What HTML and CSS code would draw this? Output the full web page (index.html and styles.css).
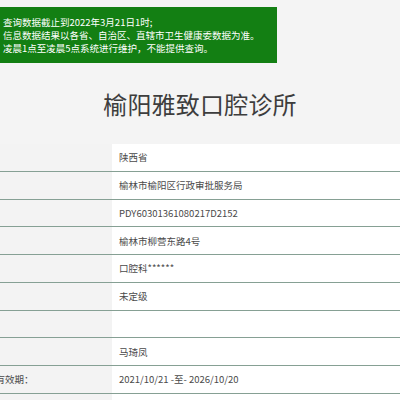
FILE: index.html
```html
<!DOCTYPE html>
<html lang="zh-CN">
<head>
<meta charset="utf-8">
<title>榆阳雅致口腔诊所</title>
<link rel="stylesheet" href="styles.css">
</head>
<body>
<div class="page">
  <div class="notice">
    <p>查询数据截止到2022年3月21日1时;</p>
    <p>信息数据结果以各省、自治区、直辖市卫生健康委数据为准。</p>
    <p>凌晨1点至凌晨5点系统进行维护，不能提供查询。</p>
  </div>
  <h1 class="title">榆阳雅致口腔诊所</h1>
  <div class="info">
    <div class="row"><div class="label">省份：</div><div class="value">陕西省</div></div>
    <div class="row"><div class="label">登记机关：</div><div class="value">榆林市榆阳区行政审批服务局</div></div>
    <div class="row"><div class="label">登记号：</div><div class="value">PDY60301361080217D2152</div></div>
    <div class="row"><div class="label">地址：</div><div class="value">榆林市柳营东路4号</div></div>
    <div class="row"><div class="label">诊疗科目：</div><div class="value">口腔科******</div></div>
    <div class="row"><div class="label">医院等级：</div><div class="value">未定级</div></div>
    <div class="row"><div class="label">法人：</div><div class="value"></div></div>
    <div class="row"><div class="label">负责人：</div><div class="value">马琦凤</div></div>
    <div class="row"><div class="label">执业许可证有效期：</div><div class="value">2021/10/21 -至- 2026/10/20</div></div>
    <div class="row"><div class="label">备注：</div><div class="value"></div></div>
  </div>
</div>
</body>
</html>
```
FILE: styles.css
```css
html, body {
  margin: 0;
  padding: 0;
}
body {
  background: #f4f4f4;
  font-family: "Microsoft YaHei", "Noto Sans CJK SC", "Noto Sans", sans-serif;
  overflow: hidden;
  height: 400px;
}
.page {
  padding-top: 7px;
}
.notice {
  width: 274px;
  background: #137f13;
  color: #ffffff;
  padding: 8.5px 0 8.5px 3px;
  font-size: 9.5px;
  line-height: 13px;
}
.notice p {
  margin: 0;
  white-space: nowrap;
}
.title {
  margin: 0;
  height: 81px;
  display: flex;
  align-items: center;
  justify-content: center;
  font-size: 24px;
  font-weight: normal;
  color: #3d3d3d;
  letter-spacing: 0.2px;
}
.info {
  margin-left: -60px;
  width: calc(100% + 60px);
}
.row {
  display: grid;
  grid-template-columns: 172px 1fr;
  height: 27.75px;
  box-sizing: border-box;
  border-bottom: 1px solid #86a094;
  font-size: 9.5px;
  color: #4a4a4a;
}
.label {
  background: #f3f3f3;
  padding-left: 8px;
  display: flex;
  align-items: center;
  white-space: nowrap;
}
.value {
  background: #ffffff;
  padding-left: 7px;
  display: flex;
  align-items: center;
  white-space: nowrap;
}
```
